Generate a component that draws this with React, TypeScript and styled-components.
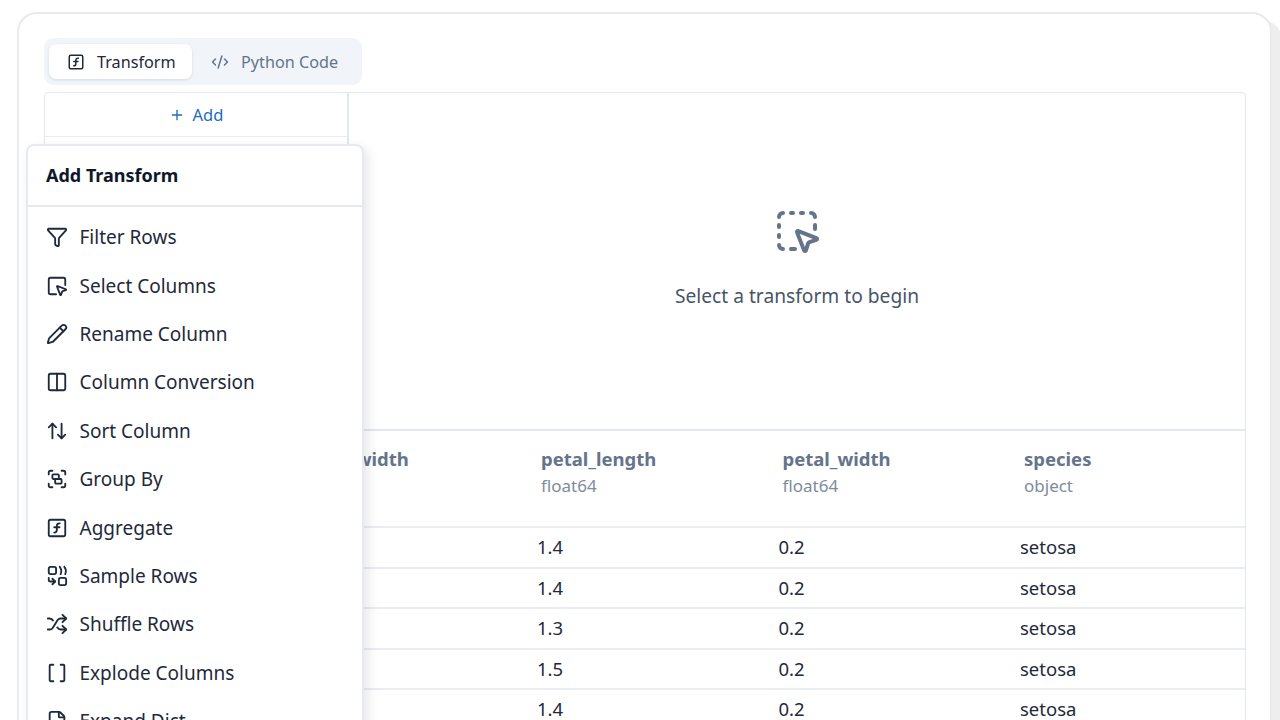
import React from 'react';
import styled, { createGlobalStyle } from 'styled-components';
import {
  ArrowUpDown,
  Brackets,
  CodeXml,
  Columns2,
  FileJson,
  Funnel,
  Group,
  Pencil,
  Plus,
  Shuffle,
  SquareDashedMousePointer,
  SquareFunction,
  SquareMousePointer,
} from 'lucide-react';

const GlobalStyle = createGlobalStyle`
  html, body {
    margin: 0;
    height: 100%;
    overflow: hidden;
    background: #fff;
    font-family: "Noto Sans", "Liberation Sans", sans-serif;
  }
  * { box-sizing: border-box; }
`;

const Page = styled.div`
  height: 720px;
  overflow: hidden;
  padding: 12px 8px 0 17px;
`;

const Card = styled.div`
  position: relative;
  height: 760px;
  background: #fff;
  border: 2px solid #e8eaed;
  border-radius: 20px;
  padding: 24px 24px 24px 25px;
  box-shadow: 10px 8px 0 #eeeeee;
`;

const TabList = styled.div`
  display: inline-flex;
  height: 47px;
  padding: 6px 5px;
  background: #f1f5f9;
  border-radius: 9px;
  margin-bottom: 7px;
  vertical-align: top;
`;

const Tab = styled.div<{ $active?: boolean }>`
  display: flex;
  align-items: center;
  gap: 12px;
  width: ${(p) => (p.$active ? '143px' : 'auto')};
  padding: ${(p) => (p.$active ? '0 18px' : '0 19px')};
  font-size: 16.2px;
  white-space: nowrap;
  color: ${(p) => (p.$active ? '#1e293b' : '#64748b')};
  background: ${(p) => (p.$active ? '#fff' : 'transparent')};
  border-radius: 7px;
  box-shadow: ${(p) => (p.$active ? '0 1px 3px rgba(15, 23, 42, 0.12)' : 'none')};
  svg {
    flex-shrink: 0;
  }
`;

const Panel = styled.div`
  border: 1px solid #e2e8f0;
  border-radius: 4px;
  background: #fff;
`;

const Editor = styled.div`
  display: grid;
  grid-template-columns: 304px 1fr;
  height: 338px;
  border-bottom: 2px solid #e2e8f0;
`;

const Sidebar = styled.div`
  border-right: 2px solid #e2e8f0;
`;

const AddRow = styled.div`
  display: flex;
  align-items: center;
  justify-content: center;
  gap: 8px;
  height: 44px;
  color: #1c6bc0;
  font-size: 16.5px;
  border-bottom: 1px solid #e9edf2;
`;

const EmptyState = styled.div`
  display: flex;
  flex-direction: column;
  align-items: center;
  padding-top: 114px;
  gap: 27px;
  color: #475569;
  font-size: 19.2px;
`;

const EmptyIcon = styled(SquareDashedMousePointer)`
  color: #64748b;
`;

const Table = styled.div`
  display: flex;
  flex-direction: column;
`;

const Row = styled.div<{ $head?: boolean }>`
  display: grid;
  grid-template-columns: 250.5px repeat(4, 241.5px);
  height: ${(p) => (p.$head ? '97px' : '40.5px')};
  align-items: ${(p) => (p.$head ? 'start' : 'center')};
  padding: ${(p) => (p.$head ? '15px 0 0' : '0 0 1px')};
  border-bottom: 2px solid #e9edf2;
`;

const HeadCell = styled.div`
  padding-left: 4px;
`;

const HeadName = styled.div`
  font-size: 18.5px;
  font-weight: 700;
  line-height: 26px;
  color: #64748b;
`;

const HeadType = styled.div`
  font-size: 17px;
  line-height: 24px;
  margin-top: 2px;
  color: #808b9b;
`;

const Cell = styled.div`
  font-size: 18.5px;
  color: #1e293b;
`;

const Popover = styled.div`
  position: absolute;
  left: 7px;
  top: 130px;
  width: 338px;
  background: #fff;
  border: 2px solid #e6eaf0;
  border-radius: 8px;
  box-shadow: 4px 4px 12px rgba(15, 23, 42, 0.1);
`;

const PopoverHeader = styled.div`
  height: 61px;
  display: flex;
  align-items: center;
  padding: 0 0 2px 18px;
  font-size: 18px;
  font-weight: 700;
  color: #0f172a;
  border-bottom: 2px solid #e6eaf0;
`;

const Menu = styled.div`
  padding-top: 6px;
`;

const MenuItem = styled.div`
  display: flex;
  align-items: center;
  gap: 11.5px;
  height: 48.4px;
  padding-left: 18px;
  font-size: 19px;
  color: #1e293b;
`;

const SampleIcon = () => (
  <svg width="22" height="22" viewBox="0 0 24 24" fill="none" stroke="currentColor" strokeWidth="2" strokeLinecap="round" strokeLinejoin="round">
    <rect x="3" y="2" width="8" height="8" rx="2" />
    <rect x="14" y="14" width="8" height="8" rx="2" />
    <path d="M15 2a8 8 0 0 1 1 8" />
    <path d="M20 2a8 8 0 0 1 1 8" />
    <path d="M3 14v2a2 2 0 0 0 2 2h5" />
    <path d="m7 15 3 3-3 3" />
  </svg>
);

const items: { label: string; icon: React.ReactNode }[] = [
  { label: 'Filter Rows', icon: <Funnel size={22} /> },
  { label: 'Select Columns', icon: <SquareMousePointer size={22} /> },
  { label: 'Rename Column', icon: <Pencil size={22} /> },
  { label: 'Column Conversion', icon: <Columns2 size={22} /> },
  { label: 'Sort Column', icon: <ArrowUpDown size={22} /> },
  { label: 'Group By', icon: <Group size={22} /> },
  { label: 'Aggregate', icon: <SquareFunction size={22} /> },
  { label: 'Sample Rows', icon: <SampleIcon /> },
  { label: 'Shuffle Rows', icon: <Shuffle size={22} /> },
  { label: 'Explode Columns', icon: <Brackets size={22} /> },
  { label: 'Expand Dict', icon: <FileJson size={22} /> },
];

const columns = [
  ['sepal_length', 'float64'],
  ['sepal_width', 'float64'],
  ['petal_length', 'float64'],
  ['petal_width', 'float64'],
  ['species', 'object'],
];

const rows = [
  ['5.1', '3.5', '1.4', '0.2', 'setosa'],
  ['4.9', '3.0', '1.4', '0.2', 'setosa'],
  ['4.7', '3.2', '1.3', '0.2', 'setosa'],
  ['4.6', '3.1', '1.5', '0.2', 'setosa'],
  ['5.0', '3.6', '1.4', '0.2', 'setosa'],
];

const App: React.FC = () => {
  return (
    <Page>
      <GlobalStyle />
      <Card>
        <TabList>
          <Tab $active>
            <SquareFunction size={18} />
            Transform
          </Tab>
          <Tab>
            <CodeXml size={18} />
            Python Code
          </Tab>
        </TabList>
        <Panel>
          <Editor>
            <Sidebar>
              <AddRow>
                <Plus size={16} />
                Add
              </AddRow>
            </Sidebar>
            <EmptyState>
              <EmptyIcon size={48} />
              Select a transform to begin
            </EmptyState>
          </Editor>
          <Table>
            <Row $head>
              {columns.map(([name, type]) => (
                <HeadCell key={name}>
                  <HeadName>{name}</HeadName>
                  <HeadType>{type}</HeadType>
                </HeadCell>
              ))}
            </Row>
            {rows.map((row, i) => (
              <Row key={i}>
                {row.map((value, j) => (
                  <Cell key={j}>{value}</Cell>
                ))}
              </Row>
            ))}
          </Table>
        </Panel>
        <Popover>
          <PopoverHeader>Add Transform</PopoverHeader>
          <Menu>
            {items.map((item) => (
              <MenuItem key={item.label}>
                {item.icon}
                {item.label}
              </MenuItem>
            ))}
          </Menu>
        </Popover>
      </Card>
    </Page>
  );
};

export default App;
